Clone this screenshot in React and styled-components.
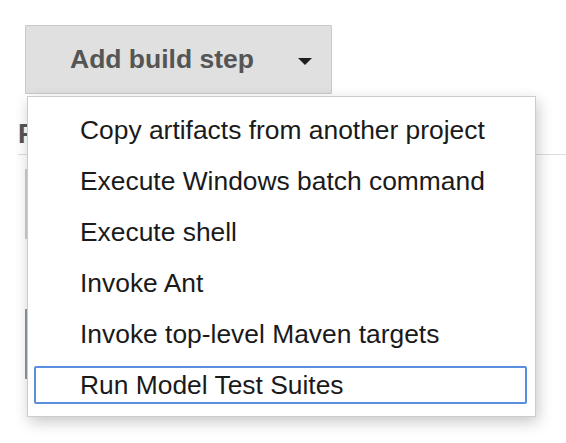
import React from "react";
import styled, { createGlobalStyle } from "styled-components";

const GlobalStyle = createGlobalStyle`
  html, body {
    margin: 0;
    padding: 0;
    background: #ffffff;
    font-family: "Liberation Sans", Arial, sans-serif;
  }
`;

const Page = styled.div`
  position: relative;
  width: 566px;
  height: 443px;
  overflow: hidden;
  padding: 25px 0 0 25px;
  box-sizing: border-box;
`;

const SplitButton = styled.button`
  display: flex;
  align-items: center;
  width: 307px;
  height: 69px;
  padding: 0 0 0 44px;
  box-sizing: border-box;
  background: #e0e0e0;
  border: 1px solid #c9c9c9;
  border-radius: 1px;
  font-family: "Liberation Sans", Arial, sans-serif;
  font-size: 26.5px;
  font-weight: bold;
  color: #555555;
  cursor: pointer;
`;

const Caret = styled.span`
  margin-left: 44px;
  margin-top: 4px;
  width: 0;
  height: 0;
  border-left: 7px solid transparent;
  border-right: 7px solid transparent;
  border-top: 7px solid #1e1e1e;
`;

const Section = styled.div`
  margin: 26px 0 0 -7px;
  display: flex;
  flex-direction: column;
`;

const SectionTitle = styled.h3`
  margin: 0;
  font-size: 27px;
  font-weight: bold;
  color: #555555;
  line-height: 28px;
  padding-bottom: 6px;
  border-bottom: 1px solid #dddddd;
`;

const FieldBlock = styled.div`
  margin: ${(p) => p.$top}px 0 0 7px;
  height: ${(p) => p.$h}px;
  border-left: 2px solid ${(p) => p.$color};
`;

const Menu = styled.ul`
  position: absolute;
  left: 27px;
  top: 96px;
  width: 509px;
  height: 321px;
  box-sizing: border-box;
  margin: 0;
  padding: 14px 8px 0 6px;
  list-style: none;
  background: #ffffff;
  border: 1px solid #cccccc;
  box-shadow: 2px 5px 14px rgba(0, 0, 0, 0.22);
  display: flex;
  flex-direction: column;
  gap: 13px;
`;

const MenuItem = styled.li`
  height: 38px;
  box-sizing: border-box;
  display: flex;
  align-items: center;
  padding-left: 44px;
  font-size: 26.4px;
  color: #1a1a1a;
  white-space: nowrap;
  border: 2px solid ${(p) => (p.$active ? "#5a8fe0" : "transparent")};
  border-radius: 2px;
`;

const items = [
  "Copy artifacts from another project",
  "Execute Windows batch command",
  "Execute shell",
  "Invoke Ant",
  "Invoke top-level Maven targets",
  "Run Model Test Suites",
];

export default function App() {
  return (
    <>
      <GlobalStyle />
      <Page>
        <SplitButton>
          Add build step
          <Caret />
        </SplitButton>
        <Section>
          <SectionTitle>F</SectionTitle>
          <FieldBlock $top={14} $h={70} $color="#d0d0d0" />
          <FieldBlock $top={70} $h={70} $color="#8c9aa6" />
        </Section>
        <Menu>
          {items.map((label, i) => (
            <MenuItem key={label} $active={i === items.length - 1}>
              {label}
            </MenuItem>
          ))}
        </Menu>
      </Page>
    </>
  );
}
